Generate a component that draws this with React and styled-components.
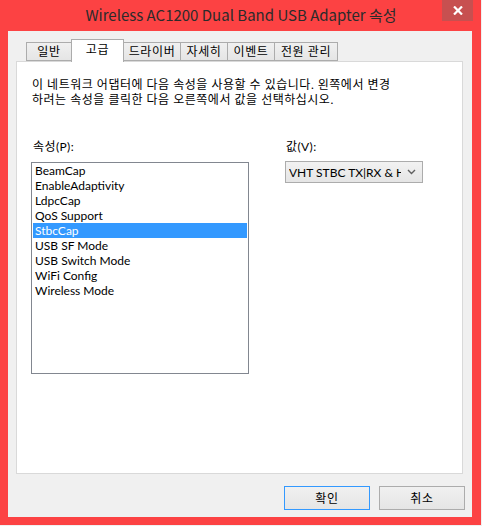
import React, { useState } from 'react';
import styled, { createGlobalStyle } from 'styled-components';

const GlobalStyle = createGlobalStyle`
  html, body {
    margin: 0;
    padding: 0;
    background: #f0f0f0;
  }
  * { box-sizing: border-box; }
`;

const tabs = [
  { label: '일반', width: 46 },
  { label: '고급', width: 53 },
  { label: '드라이버', width: 58 },
  { label: '자세히', width: 48 },
  { label: '이벤트', width: 48 },
  { label: '전원 관리', width: 64 },
];

const properties = [
  'BeamCap',
  'EnableAdaptivity',
  'LdpcCap',
  'QoS Support',
  'StbcCap',
  'USB SF Mode',
  'USB Switch Mode',
  'WiFi Config',
  'Wireless Mode',
];

const App = () => {
  const [activeTab, setActiveTab] = useState(1);
  const [selected, setSelected] = useState('StbcCap');

  return (
    <>
      <GlobalStyle />
      <Window>
        <TitleBar>
          <Title>Wireless AC1200 Dual Band USB Adapter 속성</Title>
          <CloseButton>
            <svg width="10" height="9" viewBox="0 0 10 9">
              <path d="M1 0.5 L9 8.5 M9 0.5 L1 8.5" stroke="#fff" strokeWidth="2.2" />
            </svg>
          </CloseButton>
        </TitleBar>
        <Client>
          <TabRow>
            {tabs.map((t, i) => (
              <Tab
                key={t.label}
                $width={t.width}
                $active={i === activeTab}
                onClick={() => setActiveTab(i)}
              >
                {t.label}
              </Tab>
            ))}
          </TabRow>
          <Panel>
            <Description>
              이 네트워크 어댑터에 다음 속성을 사용할 수 있습니다. 왼쪽에서 변경
              <br />
              하려는 속성을 클릭한 다음 오른쪽에서 값을 선택하십시오.
            </Description>
            <Columns>
              <Column>
                <Label>속성(P):</Label>
                <ListBox>
                  {properties.map((p) => (
                    <ListItem
                      key={p}
                      $selected={p === selected}
                      onClick={() => setSelected(p)}
                    >
                      {p}
                    </ListItem>
                  ))}
                </ListBox>
              </Column>
              <ValueColumn>
                <Label>값(V):</Label>
                <Select>
                  <SelectText>VHT STBC TX|RX &amp; HT STBC TX|RX</SelectText>
                  <svg width="9" height="6" viewBox="0 0 9 6">
                    <path d="M1 1 L4.5 4.5 L8 1" fill="none" stroke="#606060" strokeWidth="1.4" />
                  </svg>
                </Select>
              </ValueColumn>
            </Columns>
          </Panel>
          <ButtonRow>
            <Button $default>확인</Button>
            <Button>취소</Button>
          </ButtonRow>
        </Client>
      </Window>
    </>
  );
};

const Window = styled.div`
  width: 481px;
  height: 525px;
  background: #fc4243;
  padding: 0 9px 8px 8px;
  display: flex;
  flex-direction: column;
  font-family: "Lato", "Noto Sans CJK KR", sans-serif;
  font-size: 12px;
  color: #000;
`;

const TitleBar = styled.div`
  height: 31px;
  display: flex;
  align-items: flex-start;
  justify-content: center;
  position: relative;
`;

const Title = styled.div`
  margin-top: 5px;
  font-family: "Noto Sans CJK KR", sans-serif;
  font-size: 15px;
  line-height: 20px;
  color: #2b2b2b;
  padding-left: 2px;
`;

const CloseButton = styled.div`
  position: absolute;
  top: 0;
  right: -1px;
  width: 31px;
  height: 21px;
  background: #c75050;
  display: flex;
  align-items: center;
  justify-content: center;
`;

const Client = styled.div`
  flex: 1;
  background: #f0f0f0;
  display: flex;
  flex-direction: column;
  padding: 8px 7px 7px 8px;
`;

const TabRow = styled.div`
  display: flex;
  align-items: flex-end;
  height: 22px;
  padding-left: 10px;
  position: relative;
  z-index: 1;
`;

const Tab = styled.div`
  width: ${(p) => p.$width}px;
  height: ${(p) => (p.$active ? 23 : 19)}px;
  margin-left: -1px;
  margin-bottom: ${(p) => (p.$active ? -1 : 0)}px;
  border: 1px solid #acacac;
  border-bottom: ${(p) => (p.$active ? 'none' : '1px solid #acacac')};
  background: ${(p) => (p.$active ? '#fff' : 'linear-gradient(#f0f0f0, #e5e5e5)')};
  display: flex;
  align-items: center;
  justify-content: center;
  line-height: 15px;
  letter-spacing: 0.6px;
  padding-bottom: ${(p) => (p.$active ? 3 : 0)}px;
  position: relative;
  z-index: ${(p) => (p.$active ? 2 : 1)};
  cursor: default;
  &:first-child { margin-left: 0; }
`;

const Panel = styled.div`
  height: 413px;
  margin-right: 2px;
  background: #fff;
  border: 1px solid #d9d9d9;
  padding: 15px 15px 0 15px;
  display: flex;
  flex-direction: column;
`;

const Description = styled.div`
  line-height: 15px;
  letter-spacing: 0.5px;
`;

const Columns = styled.div`
  display: flex;
  margin-top: 32px;
`;

const Column = styled.div`
  display: flex;
  flex-direction: column;
  width: 217px;
`;

const ValueColumn = styled(Column)`
  width: 138px;
  margin-left: 36px;
`;

const Label = styled.div`
  line-height: 15px;
  height: 15px;
  margin-bottom: 8px;
  margin-left: 1px;
  letter-spacing: 0.4px;
`;

const ListBox = styled.div`
  height: 212px;
  border: 1px solid #828790;
  padding: 0 1px;
  margin-left: -1px;
`;

const ListItem = styled.div`
  height: 15px;
  line-height: 15px;
  padding-left: 2px;
  background: ${(p) => (p.$selected ? '#3399ff' : 'transparent')};
  color: ${(p) => (p.$selected ? '#fff' : '#000')};
  cursor: default;
`;

const Select = styled.div`
  height: 22px;
  margin-top: -1px;
  border: 1px solid #acacac;
  background: linear-gradient(#f2f2f2, #e5e5e5);
  display: flex;
  align-items: center;
  padding: 0 6px 0 3px;
  gap: 6px;
`;

const SelectText = styled.div`
  flex: 1;
  overflow: hidden;
  white-space: nowrap;
  line-height: 15px;
`;

const ButtonRow = styled.div`
  display: flex;
  justify-content: flex-end;
  gap: 9px;
  margin-top: 12px;
`;

const Button = styled.div`
  width: 86px;
  height: 24px;
  border: 1px solid ${(p) => (p.$default ? '#3399ff' : '#acacac')};
  background: linear-gradient(#f0f0f0, #e5e5e5);
  display: flex;
  align-items: center;
  justify-content: center;
  line-height: 15px;
  letter-spacing: 0.6px;
  cursor: default;
`;

export default App;
